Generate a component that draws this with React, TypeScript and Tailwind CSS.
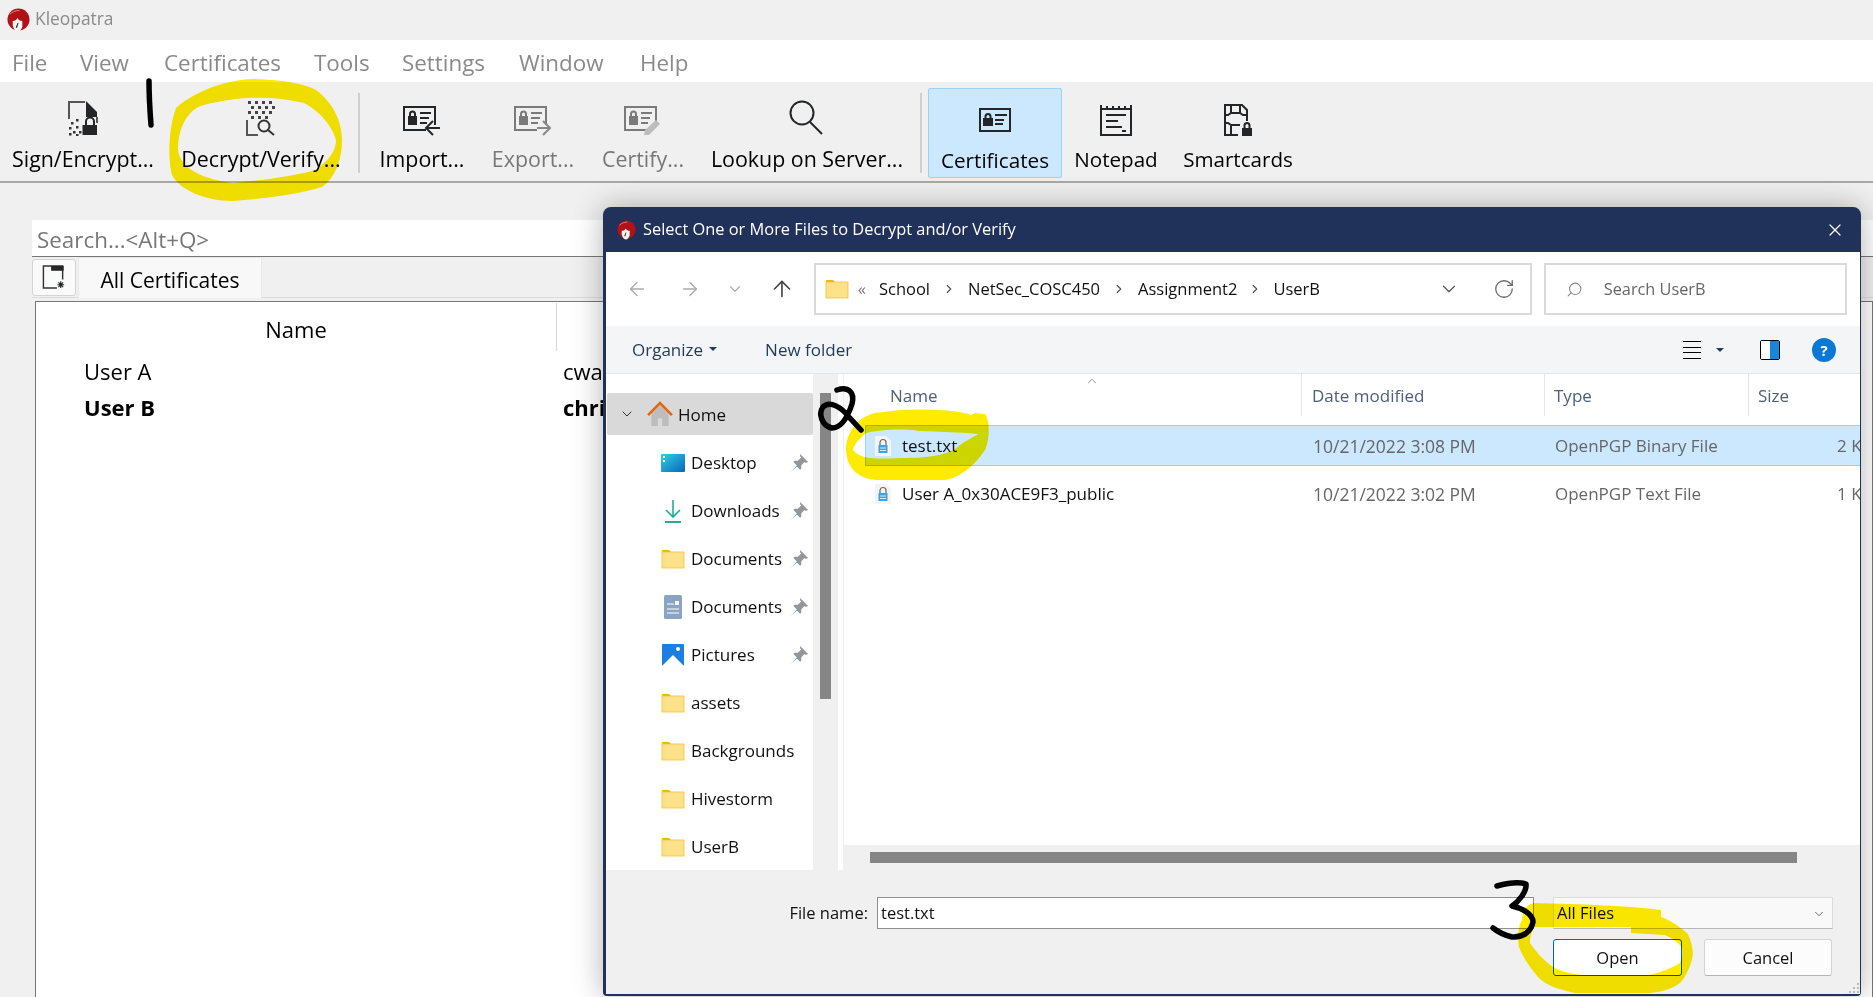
import { ChevronDown, ChevronRight, ChevronUp, Search, X, RotateCw, ArrowLeft, ArrowRight, ArrowUp } from "lucide-react";

const menuItems = [
  { label: "File", width: "w-[68px]" },
  { label: "View", width: "w-[84px]" },
  { label: "Certificates", width: "w-[150px]" },
  { label: "Tools", width: "w-[88px]" },
  { label: "Settings", width: "w-[117px]" },
  { label: "Window", width: "w-[121px]" },
  { label: "Help", width: "w-[60px]" },
];

const Logo = ({ className }: { className: string }) => (
  <svg viewBox="0 0 24 24" className={className}>
    <circle cx="12" cy="11.500" r="11.500" fill="#b01218" />
    <path d="M6 13c2.500 0 4-1 5-3 1 2 2.500 3 5 3v6c-1 3-2.500 5-5 5s-4-3-5-6z" fill="#f7f5f2" />
    <path d="M3 6c3-3 7-4 10-4" stroke="#e88" strokeWidth="1" fill="none" />
    <path d="M11 15l-2 5h1.500l1.500-5z" fill="#222" />
  </svg>
);

const SignIcon = () => (
  <svg viewBox="0 0 30 36" className="h-9 w-[30px]">
    <path d="M1 19V2h16" fill="none" stroke="#555" strokeWidth="2" />
    <path d="M18 1l11 11v5H18z" fill="#232629" />
    <path d="M29 17v6" stroke="#555" strokeWidth="2" />
    {[[3, 22], [8, 19], [8, 26], [1, 27], [5, 31], [11, 31], [1, 33], [8, 34]].map(([x, y]) => (
      <rect key={`${x}-${y}`} x={x} y={y} width="2.5" height="2.5" fill="#333" />
    ))}
    <rect x="14.500" y="25" width="14.500" height="10" fill="#232629" />
    <path d="M18 25v-3.500a4 4 0 018 0V25" fill="none" stroke="#232629" strokeWidth="2" />
  </svg>
);

const DecryptIcon = () => (
  <svg viewBox="0 0 30 36" className="h-9 w-[30px]">
    {[2, 9, 16, 23, 5, 12, 19, 26, 2, 9, 16, 23, 5, 12, 19].map((x, i) => (
      <rect key={i} x={x} y={i < 4 ? 1 : i < 8 ? 6 : i < 12 ? 11 : 16} width="3" height="3" fill="#444" />
    ))}
    <path d="M1 20v15h11" fill="none" stroke="#555" strokeWidth="2" />
    <circle cx="18" cy="26" r="5.500" fill="none" stroke="#333" strokeWidth="2" />
    <path d="M22 30l6 5" stroke="#333" strokeWidth="2" />
  </svg>
);

const CardIcon = ({ color, mode }: { color: string; mode: "import" | "export" | "certify" }) => (
  <svg viewBox="0 0 38 30" className="h-[30px] w-[38px]">
    <path d="M23 24H1V1h31v18" fill="none" stroke={color} strokeWidth="2" />
    <rect x="5" y="10" width="9" height="9" fill={color} />
    <path d="M7 10V8a2.500 2.500 0 015 0v2" fill="none" stroke={color} strokeWidth="2" />
    <path d="M17 7h11M17 12h9M17 17h7" stroke={color} strokeWidth="2" />
    {mode === "import" && <path d="M37 22H24M30 15l-7 7 7 7" fill="none" stroke={color} strokeWidth="2" />}
    {mode === "export" && <path d="M23 22h13M29 15l7 7-7 7" fill="none" stroke="#888" strokeWidth="2" />}
    {mode === "certify" && <path d="M20 29l1-5 11-10 4 4-11 11z" fill="#bdbdbd" />}
  </svg>
);

const LookupIcon = () => (
  <svg viewBox="0 0 36 36" className="h-9 w-9">
    <circle cx="13" cy="13" r="11.500" fill="none" stroke="#232629" strokeWidth="2" />
    <path d="M21 22l12 12" stroke="#232629" strokeWidth="2" />
  </svg>
);

const CertificatesIcon = () => (
  <svg viewBox="0 0 32 24" className="h-6 w-8">
    <rect x="1" y="1" width="30" height="22" fill="none" stroke="#232629" strokeWidth="2" />
    <rect x="4" y="10" width="10" height="8" fill="#232629" />
    <path d="M6.500 10V8.500a2.500 2.500 0 015 0V10" fill="none" stroke="#232629" strokeWidth="2" />
    <path d="M16 7h12M16 12h9M16 16h8" stroke="#232629" strokeWidth="2" />
  </svg>
);

const NotepadIcon = () => (
  <svg viewBox="0 0 32 32" className="h-8 w-8">
    <path d="M1 5h30v26H1z" fill="none" stroke="#232629" strokeWidth="2" />
    <path d="M1 1v4M7 2v3M13 2v3M19 2v3M25 2v3M31 1v4" stroke="#232629" strokeWidth="2" />
    <path d="M6 11h20M6 17h12M6 23h16" stroke="#232629" strokeWidth="2" />
    <rect x="22" y="26" width="4" height="2" fill="#232629" />
  </svg>
);

const SmartcardIcon = () => (
  <svg viewBox="0 0 28 32" className="h-8 w-7">
    <path d="M14 31H1V1h17l5 5v11" fill="none" stroke="#232629" strokeWidth="2" />
    <path d="M7 1v9M16 1v9M7 22v9M1 11h3l3-2h9l3 2h4M1 19h3l3 2h9" fill="none" stroke="#232629" strokeWidth="2" />
    <rect x="18" y="24" width="10" height="8" fill="#232629" />
    <path d="M20.500 24v-2.500a2.500 2.500 0 015 0V24" fill="none" stroke="#232629" strokeWidth="2" />
  </svg>
);

const tools = [
  { label: "Sign/Encrypt...", width: "w-[166px]", icon: <SignIcon /> },
  { label: "Decrypt/Verify...", width: "w-[190px]", icon: <DecryptIcon /> },
  { sep: true, gap: "ml-[2px]" },
  { label: "Import...", width: "w-[124px]", icon: <CardIcon color="#232629" mode="import" /> },
  { label: "Export...", width: "w-[98px]", icon: <CardIcon color="#7a7a7a" mode="export" />, off: true },
  { label: "Certify...", width: "w-[122px]", icon: <CardIcon color="#7a7a7a" mode="certify" />, off: true },
  { label: "Lookup on Server...", width: "w-[206px]", icon: <LookupIcon /> },
  { sep: true, gap: "ml-[10px]" },
];

const ToolButton = ({ label, width, icon, off, small }: { label: string; width: string; icon: React.ReactNode; off?: boolean; small?: boolean }) => (
  <div className={`flex shrink-0 flex-col items-center pt-4 ${width}`}>
    <div className="flex h-9 items-end">{icon}</div>
    <span className={`mt-[9px] whitespace-nowrap leading-7 ${small ? "text-[20.6px]" : "text-[21.4px]"} ${off ? "text-[#777]" : "text-black"}`}>{label}</span>
  </div>
);

const Folder = () => (
  <svg viewBox="0 0 24 20" className="h-5 w-6">
    <path d="M1 2a1 1 0 011-1h6l2 2H1z" fill="#f5b400" />
    <rect x="1" y="3" width="22" height="16" fill="#fde28a" stroke="#f3bd45" strokeWidth="0.8" />
  </svg>
);

const DesktopIcon = () => (
  <svg viewBox="0 0 24 20" className="h-5 w-6">
    <defs>
      <linearGradient id="desk" x1="0" y1="0" x2="1" y2="1">
        <stop offset="0" stopColor="#2fd0e6" />
        <stop offset="1" stopColor="#0a66b8" />
      </linearGradient>
    </defs>
    <rect x="0" y="1" width="24" height="18" rx="1" fill="url(#desk)" />
    <path d="M2 3h2v2H2zM2 7h2v2H2z" fill="#fff" />
  </svg>
);

const DownloadIcon = () => (
  <svg viewBox="0 0 24 24" className="h-6 w-6">
    <path d="M12 1v17M5 11l7 7 7-7" fill="none" stroke="#1fae95" strokeWidth="1.600" />
    <path d="M4 23h16" stroke="#1fae95" strokeWidth="2" />
  </svg>
);

const DocsIcon = () => (
  <svg viewBox="0 0 24 24" className="h-6 w-6">
    <rect x="3" y="0" width="18" height="24" rx="1.500" fill="#8aa5c4" />
    <path d="M6 9h7M6 14h12M6 18h12" stroke="#fff" strokeWidth="1.200" />
    <rect x="14" y="6" width="4" height="4" fill="#fff" />
  </svg>
);

const PicturesIcon = () => (
  <svg viewBox="0 0 24 24" className="h-6 w-6">
    <rect x="1" y="1" width="22" height="22" rx="1" fill="#1a7fe0" />
    <path d="M1 23l11-11 11 11z" fill="#fff" />
    <circle cx="17" cy="6" r="2" fill="#fff" />
  </svg>
);

const HomeIcon = () => (
  <svg viewBox="0 0 24 24" className="h-[26px] w-[26px]">
    <path d="M4 12v11h6v-7h4v7h6V12l-8-8z" fill="#bdbdbd" />
    <path d="M1 13L12 2l11 11" fill="none" stroke="#e0660f" strokeWidth="2.400" />
  </svg>
);

const Pin = () => (
  <svg viewBox="0 0 16 16" className="h-[18px] w-[18px]">
    <path d="M9 0l7 7-2 1-1-1-3 3 0 3-1 1-3-3-5 5 5-6-3-3 1-1 3 0 3-3-1-1z" fill="#8f979c" />
  </svg>
);

const FileLock = () => (
  <svg viewBox="0 0 16 20" className="h-5 w-4 shrink-0">
    <path d="M0 0h11l5 5v15H0z" fill="#f4f4f4" />
    <path d="M5 9V6.500a3 3 0 016 0V9" fill="none" stroke="#666" strokeWidth="1.200" />
    <rect x="3.500" y="9" width="9" height="8" fill="#3ea2dc" />
    <path d="M5 12h6M5 14.500h6" stroke="#fff" strokeWidth="0.800" />
  </svg>
);

const places = [
  { label: "Desktop", icon: <DesktopIcon />, pin: true },
  { label: "Downloads", icon: <DownloadIcon />, pin: true },
  { label: "Documents", icon: <Folder />, pin: true },
  { label: "Documents", icon: <DocsIcon />, pin: true },
  { label: "Pictures", icon: <PicturesIcon />, pin: true },
  { label: "assets", icon: <Folder /> },
  { label: "Backgrounds", icon: <Folder /> },
  { label: "Hivestorm", icon: <Folder /> },
  { label: "UserB", icon: <Folder /> },
];

const FileDialog = () => (
  <div className="absolute left-[603px] top-[207px] flex h-[789px] w-[1258px] flex-col rounded-t-lg rounded-b-[4px] bg-[#20315a] pb-[2px] pl-[3px] pr-px shadow-[0_0_30px_rgba(0,0,0,0.3)]">
    {/* Title */}
    <div className="flex h-[45px] shrink-0 items-center pl-[11px] pr-[15px]">
      <Logo className="h-[20px] w-[19px]" />
      <span className="ml-[7px] text-[16.4px] text-white">Select One or More Files to Decrypt and/or Verify</span>
      <X className="ml-auto h-[20px] w-[20px] text-white" strokeWidth={1.500} />
    </div>

    {/* Address row */}
    <div className="flex h-[74px] shrink-0 items-center bg-white pl-[20px] pr-[13px]">
      <ArrowLeft className="h-[22px] w-[22px] text-[#aaa]" strokeWidth={1.500} />
      <ArrowRight className="ml-[31px] h-[22px] w-[22px] text-[#aaa]" strokeWidth={1.500} />
      <ChevronDown className="ml-[25px] h-[18px] w-[18px] text-[#aaa]" strokeWidth={1.500} />
      <ArrowUp className="ml-[25px] h-[26px] w-[26px] text-[#444]" strokeWidth={1.500} />
      <div className="ml-[19px] flex h-[52px] w-[720px] items-center border-2 border-[#dadada] pl-[9px] pr-[15px] text-[16.5px] text-[#111]">
        <Folder />
        <span className="ml-[9px] text-[#777]">«</span>
        <span className="ml-[13px]">School</span>
        <ChevronRight className="mx-[12px] h-[14px] w-[14px] text-[#555]" />
        <span>NetSec_COSC450</span>
        <ChevronRight className="mx-[12px] h-[14px] w-[14px] text-[#555]" />
        <span>Assignment2</span>
        <ChevronRight className="mx-[11px] h-[14px] w-[14px] text-[#555]" />
        <span>UserB</span>
        <ChevronDown className="ml-auto h-[22px] w-[22px] text-[#555]" strokeWidth={1.300} />
        <RotateCw className="ml-[33px] h-[22px] w-[22px] text-[#666]" strokeWidth={1.400} />
      </div>
      <div className="ml-[12px] flex h-[52px] w-[304px] items-center border-2 border-[#dadada] pl-[20px] text-[16.3px] text-[#666]">
        <Search className="h-[17px] w-[17px] -scale-x-100 text-[#888]" strokeWidth={1.500} />
        <span className="ml-[21px]">Search UserB</span>
      </div>
    </div>

    {/* Command bar */}
    <div className="flex h-[48px] shrink-0 items-center border-b border-[#e6e6e6] bg-[#f4f5f6] pl-[26px] pr-[24px] pt-px text-[17px] text-[#1f3a5a]">
      <span>Organize</span>
      <span className="ml-[6px] mt-[-3px] h-0 w-0 border-x-[4px] border-t-[4px] border-x-transparent border-t-[#1f3a5a]" />
      <span className="ml-[48px]">New folder</span>
      <div className="ml-auto flex h-[18px] w-[18px] flex-col justify-between">
        <span className="h-px bg-black" />
        <span className="h-px bg-black" />
        <span className="h-px bg-black" />
        <span className="h-px bg-black" />
      </div>
      <span className="ml-[15px] h-0 w-0 border-x-[4px] border-t-[4px] border-x-transparent border-t-[#1f3a5a]" />
      <div className="ml-[36px] flex h-[20px] w-[20px] overflow-hidden rounded-[2px] border border-black">
        <span className="w-1/2 bg-white" />
        <span className="w-1/2 bg-[#1a86d8]" />
      </div>
      <span className="ml-[32px] flex h-6 w-6 items-center justify-center rounded-full bg-[#0a78d4] text-[15px] font-bold text-white">?</span>
    </div>

    {/* Body */}
    <div className="flex h-[496px] shrink-0 bg-white">
      <div className="flex w-[207px] shrink-0 flex-col pl-px pt-[19px] text-[17px] text-[#111]">
        <div className="flex h-[42px] shrink-0 items-center rounded-[2px] bg-[#d9d9d9] pl-[12px]">
          <ChevronDown className="h-[16px] w-[16px] text-[#333]" strokeWidth={1.500} />
          <span className="ml-[12px] flex"><HomeIcon /></span>
          <span className="ml-[5px] pt-px">Home</span>
        </div>
        <div className="flex flex-col pt-[4px]">
          {places.map((place, i) => (
            <div key={i} className="flex h-[48px] items-center pl-[54px] pr-[5px]">
              <span className="flex w-[24px] justify-center">{place.icon}</span>
              <span className="ml-[6px]">{place.label}</span>
              {place.pin && <span className="ml-auto"><Pin /></span>}
            </div>
          ))}
        </div>
      </div>
      <div className="flex w-[25px] shrink-0 justify-center bg-[#f0f0f0] pt-[19px]">
        <div className="h-[306px] w-[11px] bg-[#868686]" />
      </div>
      <div className="w-[5px] shrink-0 bg-white" />
      <div className="flex min-w-0 flex-1 flex-col border-l border-[#f0f0f0]">
        <div className="relative flex h-[42px] shrink-0 text-[17px] text-[#4c607a]">
          <span className="flex w-[458px] items-center border-r border-[#e5e5e5] pl-[46px] pt-[2px]">Name</span>
          <span className="flex w-[243px] items-center border-r border-[#e5e5e5] pl-[10px] pt-[2px]">Date modified</span>
          <span className="flex w-[204px] items-center border-r border-[#e5e5e5] pl-[9px] pt-[2px]">Type</span>
          <span className="flex items-center pl-[9px] pt-[2px]">Size</span>
          <ChevronUp className="absolute left-[241px] top-0 h-[14px] w-[14px] text-[#888]" strokeWidth={1.500} />
        </div>
        <div className="flex min-h-0 flex-1 flex-col overflow-hidden pl-[21px] pt-[9px] text-[17px]">
          <div className="flex h-[41px] shrink-0 items-center whitespace-nowrap border border-r-0 border-[#99d1ff] bg-[#cce8ff] pl-[9px] pt-px">
            <FileLock />
            <span className="ml-[11px] w-[411px] shrink-0 text-[#111]">test.txt</span>
            <span className="w-[242px] shrink-0 text-[17.500px] text-[#666]">10/21/2022 3:08 PM</span>
            <span className="w-[282px] shrink-0 text-[#666]">OpenPGP Binary File</span>
            <span className="shrink-0 text-[#666]">2 KB</span>
          </div>
          <div className="mt-[7px] flex h-[41px] shrink-0 items-center whitespace-nowrap pl-[10px] pt-px">
            <FileLock />
            <span className="ml-[11px] w-[411px] shrink-0 text-[#111]">User A_0x30ACE9F3_public</span>
            <span className="w-[242px] shrink-0 text-[17.500px] text-[#666]">10/21/2022 3:02 PM</span>
            <span className="w-[282px] shrink-0 text-[#666]">OpenPGP Text File</span>
            <span className="shrink-0 text-[#666]">1 KB</span>
          </div>
        </div>
        <div className="h-[25px] shrink-0 bg-[#f0f0f0] pl-[26px] pt-[7px]">
          <div className="h-[11px] w-[927px] bg-[#868686]" />
        </div>
      </div>
    </div>

    {/* Footer */}
    <div className="relative min-h-0 flex-1 bg-[#f0f0f0] pt-[27px] text-[16.5px] text-[#111]">
      <div className="flex h-[32px] items-center">
        <span className="w-[271px] pr-[9px] pt-px text-right">File name:</span>
        <div className="flex h-[32px] w-[657px] items-center border border-[#8f8f8f] bg-white pl-[3px] pt-px">test.txt</div>
        <div className="ml-[19px] flex h-[32px] w-[280px] items-center justify-between border border-[#dcdcdc] border-b-[#b8b8b8] bg-[#f9f9f9] px-[3px] pr-[6px] pt-px">
          <span>All Files</span>
          <ChevronDown className="h-[14px] w-[14px] text-[#555]" strokeWidth={1.500} />
        </div>
      </div>
      <div className="ml-[947px] mt-[10px] flex gap-[22px]">
        <div className="flex h-[37px] w-[129px] items-center justify-center rounded-[3px] border border-[#0067c0] bg-white pt-[2px]">Open</div>
        <div className="flex h-[37px] w-[128px] items-center justify-center rounded-[3px] border border-[#d5d5d5] border-b-[#b5b5b5] bg-[#fcfcfc] pt-[2px]">Cancel</div>
      </div>
      <svg viewBox="0 0 12 12" className="absolute bottom-0 right-0 h-3 w-3">
        <path d="M9 1h2v2H9zM5 5h2v2H5zM9 5h2v2H9zM1 9h2v2H1zM5 9h2v2H5zM9 9h2v2H9z" fill="#bbb" />
      </svg>
    </div>
  </div>
);

const Annotations = () => (
  <>
    <svg viewBox="0 0 1873 997" className="pointer-events-none absolute left-0 top-0 h-[997px] w-[1873px] mix-blend-multiply">
      <g fill="#ffeb00" fillRule="evenodd">
        <path d="M253 79C285 80 305 84 316 90 332 102 342 120 342 140 342 160 335 178 322 187 300 194 270 198 233 201 205 201 180 190 172 175 168 160 168 130 176 108 190 95 220 80 253 79ZM245 98C225 100 205 104 198 107 185 115 178 130 178 150 180 165 195 178 233 183 265 180 300 175 315 170 330 160 336 150 336 140 332 125 318 110 304 103 285 98 265 97 245 98Z" />
        <path d="M900 410C940 408 965 412 971 415L975 413 985 414C990 420 990 440 985 450 975 465 960 478 945 480L880 480C860 480 847 470 846 450 846 435 855 418 875 413ZM866 433C855 442 853 448 853 450 860 460 880 459 900 458 930 458 950 455 960 445 970 438 978 435 978 434 960 432 940 432 920 431 900 428 880 430 866 433Z" />
        <path d="M1534 903C1580 904 1630 906 1661 910L1661 917C1675 922 1687 933 1687 933 1692 940 1693 953 1693 953 1692 965 1685 978 1680 983 1670 990 1660 992 1650 993L1575 993C1560 990 1545 985 1538 977 1528 965 1522 955 1519 947 1517 935 1519 925 1522 920 1522 910 1528 904 1534 903ZM1534 927C1530 935 1530 940 1530 943 1538 955 1546 962 1553 967 1562 972 1572 974 1582 975L1650 975C1662 972 1672 968 1680 963 1683 957 1682 952 1682 948 1678 942 1672 938 1665 935L1631 933 1631 927Z" />
      </g>
    </svg>
    <svg viewBox="0 0 1873 997" className="pointer-events-none absolute left-0 top-0 h-[997px] w-[1873px]">
      <g fill="none" stroke="#000" strokeLinecap="round" strokeLinejoin="round">
        <path strokeWidth="5.500" d="M149 81C149 95 150 112 151 125" />
        <path strokeWidth="5.500" d="M837 390C848 386 855 392 852 404 848 416 842 428 832 428 822 426 818 414 823 407 830 400 842 408 848 416L861 430" />
        <path strokeWidth="5.500" d="M1497 886C1508 883 1520 882 1526 884 1527 892 1518 902 1512 906 1522 908 1533 914 1533 922 1531 932 1522 938 1512 937 1504 935 1498 932 1493 928" />
      </g>
    </svg>
  </>
);

const App = () => {
  return (
    <div className="relative h-[997px] w-[1873px] overflow-hidden bg-[#f0f0f0] font-['Open_Sans',sans-serif]">
      {/* Window title */}
      <div className="flex h-10 items-center pl-[7px]">
        <Logo className="h-[24px] w-[23px]" />
        <span className="ml-[5px] pb-[3px] text-[17.400px] text-[#8a8a8a]">Kleopatra</span>
      </div>

      {/* Menu */}
      <div className="flex h-[44px] items-center border-b-2 border-[#f0f0f0] bg-white pl-[12px] pt-[4px] text-[22.400px] text-[#8a8a8a]">
        {menuItems.map((item) => (
          <span key={item.label} className={`shrink-0 ${item.width}`}>{item.label}</span>
        ))}
      </div>

      {/* Toolbar */}
      <div className="flex h-[99px] border-b-2 border-[#a8a8a8]">
        {tools.map((tool, i) =>
          tool.sep ? (
            <div key={i} className={`mt-[9px] h-[80px] w-[2px] shrink-0 bg-[#cfcfcf] ${tool.gap}`} />
          ) : (
            <ToolButton key={i} label={tool.label!} width={tool.width!} icon={tool.icon} off={tool.off} />
          )
        )}
        <div className="ml-[6px] mt-[4px] flex h-[90px] w-[134px] shrink-0 flex-col items-center rounded-[2px] border border-[#99d1ff] bg-[#cce8ff] pt-[19px]">
          <CertificatesIcon />
          <span className="mt-[14px] text-[20.700px] leading-7 text-black">Certificates</span>
        </div>
        <ToolButton label="Notepad" width="w-[108px]" icon={<NotepadIcon />} small />
        <ToolButton label="Smartcards" width="w-[136px]" icon={<SmartcardIcon />} small />
      </div>

      {/* Search */}
      <div className="ml-[32px] mt-[37px] flex h-[37px] items-center border-b border-[#777] bg-white pl-[5px] pt-[3px] text-[22.400px] text-[#777]">
        Search...&lt;Alt+Q&gt;
      </div>

      {/* Tabs */}
      <div className="ml-[32px] flex h-[41px] border-b border-[#dcdcdc]">
        <div className="mt-[2px] flex h-[37px] w-[44px] items-center justify-center rounded-[3px] border border-[#d4d4d4] bg-[#fafafa]">
          <svg viewBox="0 0 24 26" className="h-[25px] w-[24px]">
            <path d="M15 24H1V1h20v14" fill="none" stroke="#333" strokeWidth="1.500" />
            <rect x="9" y="1" width="13" height="5" fill="#232629" />
            <path d="M19 17v7M15.500 20.500h7M16.500 18l5 5M21.500 18l-5 5" stroke="#232629" strokeWidth="1.200" />
          </svg>
        </div>
        <div className="ml-[2px] flex h-[41px] w-[184px] items-center justify-center border border-b-0 border-[#e8e8e8] bg-[#f8f8f8] pt-[5px] text-[21px] text-black">All Certificates</div>
      </div>

      {/* Table */}
      <div className="ml-[35px] mt-[3px] h-[700px] border border-[#777] bg-white text-[22px] text-black">
        <div className="flex h-[49px] items-center">
          <span className="flex h-[48px] w-[521px] items-center justify-center border-r border-[#d8d8d8] pt-[6px]">Name</span>
        </div>
        <div className="flex h-[40px] items-center pl-[48px]">
          <span className="w-[479px]">User A</span>
          <span>cwa</span>
        </div>
        <div className="flex h-[32px] items-center pl-[48px] font-bold">
          <span className="w-[479px]">User B</span>
          <span>chri</span>
        </div>
      </div>

      <FileDialog />
      <Annotations />
    </div>
  );
};

export default App;
